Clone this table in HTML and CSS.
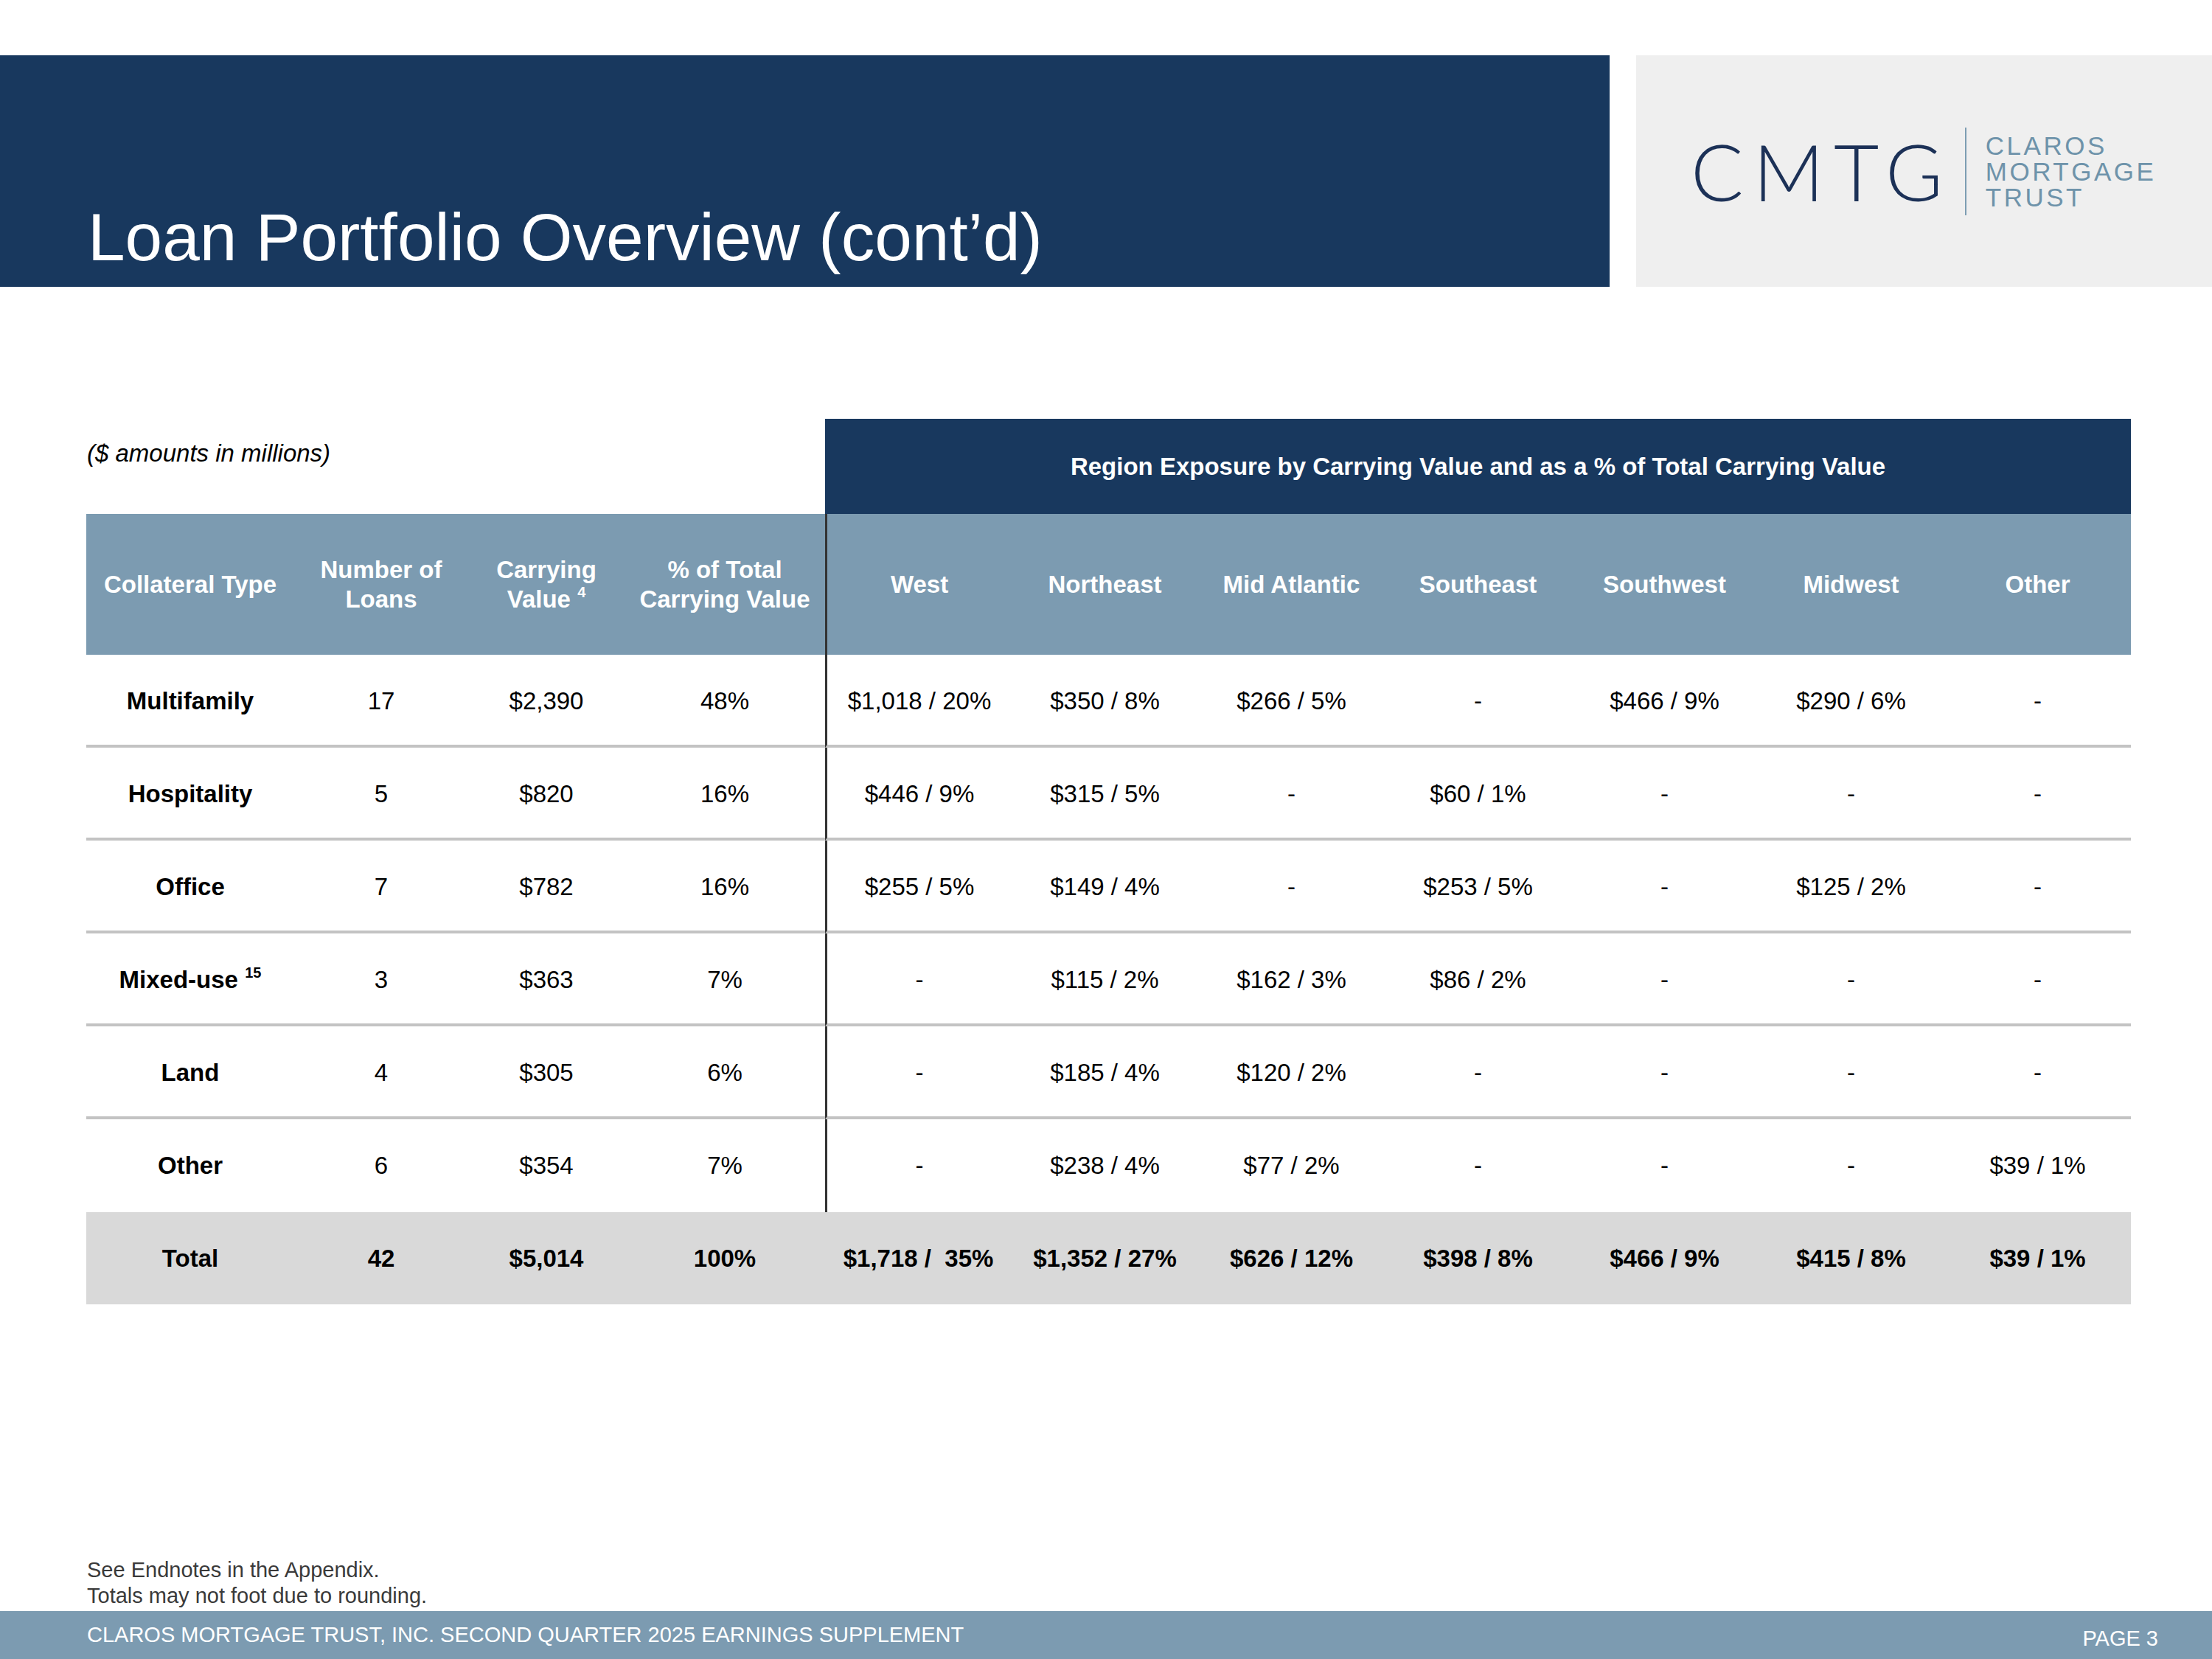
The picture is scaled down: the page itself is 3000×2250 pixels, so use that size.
FILE: index.html
```html
<!DOCTYPE html>
<html lang="en">
<head>
<meta charset="utf-8">
<title>Loan Portfolio Overview (cont’d)</title>
<link rel="stylesheet" href="styles.css">
</head>
<body>
<div class="page">
  <header class="top">
    <div class="title-bar">
      <h1 class="title">Loan Portfolio Overview (cont’d)</h1>
    </div>
    <div class="logo-box">
      <span class="logo-mark">CMTG</span>
      <span class="logo-rule"></span>
      <span class="logo-words">
        <span>CLAROS</span>
        <span>MORTGAGE</span>
        <span>TRUST</span>
      </span>
    </div>
  </header>

  <main class="content">
    <table class="grid">
      <colgroup>
        <col class="c-type"><col class="c-num"><col class="c-cv"><col class="c-pct">
        <col class="c-reg"><col class="c-reg"><col class="c-reg"><col class="c-reg"><col class="c-reg"><col class="c-reg"><col class="c-reg">
      </colgroup>
      <thead>
        <tr class="row-region">
          <td class="note" colspan="4">($ amounts in millions)</td>
          <th class="region-title" colspan="7">Region Exposure by Carrying Value and as a % of Total Carrying Value</th>
        </tr>
        <tr class="row-head">
          <th>Collateral Type</th>
          <th>Number of<br>Loans</th>
          <th>Carrying<br>Value <sup>4</sup></th>
          <th>% of Total<br>Carrying Value</th>
          <th class="split">West</th>
          <th>Northeast</th>
          <th>Mid Atlantic</th>
          <th>Southeast</th>
          <th>Southwest</th>
          <th>Midwest</th>
          <th>Other</th>
        </tr>
      </thead>
      <tbody>
        <tr class="row-data lined">
          <td class="type">Multifamily</td><td>17</td><td>$2,390</td><td>48%</td>
          <td class="split">$1,018 / 20%</td><td>$350 / 8%</td><td>$266 / 5%</td><td>-</td><td>$466 / 9%</td><td>$290 / 6%</td><td>-</td>
        </tr>
        <tr class="row-data lined">
          <td class="type">Hospitality</td><td>5</td><td>$820</td><td>16%</td>
          <td class="split">$446 / 9%</td><td>$315 / 5%</td><td>-</td><td>$60 / 1%</td><td>-</td><td>-</td><td>-</td>
        </tr>
        <tr class="row-data lined">
          <td class="type">Office</td><td>7</td><td>$782</td><td>16%</td>
          <td class="split">$255 / 5%</td><td>$149 / 4%</td><td>-</td><td>$253 / 5%</td><td>-</td><td>$125 / 2%</td><td>-</td>
        </tr>
        <tr class="row-data lined">
          <td class="type">Mixed-use <sup>15</sup></td><td>3</td><td>$363</td><td>7%</td>
          <td class="split">-</td><td>$115 / 2%</td><td>$162 / 3%</td><td>$86 / 2%</td><td>-</td><td>-</td><td>-</td>
        </tr>
        <tr class="row-data lined">
          <td class="type">Land</td><td>4</td><td>$305</td><td>6%</td>
          <td class="split">-</td><td>$185 / 4%</td><td>$120 / 2%</td><td>-</td><td>-</td><td>-</td><td>-</td>
        </tr>
        <tr class="row-data">
          <td class="type">Other</td><td>6</td><td>$354</td><td>7%</td>
          <td class="split">-</td><td>$238 / 4%</td><td>$77 / 2%</td><td>-</td><td>-</td><td>-</td><td>$39 / 1%</td>
        </tr>
        <tr class="row-total">
          <td>Total</td><td>42</td><td>$5,014</td><td>100%</td>
          <td>$1,718 /&nbsp; 35%</td><td>$1,352 / 27%</td><td>$626 / 12%</td><td>$398 / 8%</td><td>$466 / 9%</td><td>$415 / 8%</td><td>$39 / 1%</td>
        </tr>
      </tbody>
    </table>
  </main>

  <div class="notes">
    <p>See Endnotes in the Appendix.</p>
    <p>Totals may not foot due to rounding.</p>
  </div>

  <footer class="footer">
    <span class="footer-left">CLAROS MORTGAGE TRUST, INC. SECOND QUARTER 2025 EARNINGS SUPPLEMENT</span>
    <span class="footer-page">PAGE 3</span>
  </footer>
</div>
</body>
</html>
```

FILE: styles.css
```css
* { box-sizing: border-box; }

html, body {
  margin: 0;
  padding: 0;
  background: #ffffff;
}

body {
  font-family: "Liberation Sans", Arial, sans-serif;
  color: #000000;
}

.page {
  width: 3000px;
  height: 2250px;
  display: flex;
  flex-direction: column;
  overflow: hidden;
}

/* ---------- header ---------- */
.top {
  display: flex;
  margin-top: 75px;
  height: 314px;
}

.title-bar {
  width: 2183px;
  flex: none;
  background: #18385e;
  display: flex;
  align-items: flex-end;
  padding: 0 0 22px 119px;
}

.title {
  margin: 0;
  font-size: 91px;
  line-height: 91px;
  font-weight: normal;
  color: #ffffff;
  white-space: nowrap;
}

.logo-box {
  width: 781px;
  flex: none;
  margin-left: 36px;
  background: #efefef;
  display: flex;
  align-items: center;
  padding-left: 74px;
}

.logo-mark {
  font-family: "Lato", "Liberation Sans", sans-serif;
  font-weight: 300;
  font-size: 106px;
  line-height: 1;
  letter-spacing: 13px;
  color: #1c3157;
}

.logo-rule {
  width: 2px;
  height: 119px;
  background: #7d9db3;
  margin-left: 17px;
  margin-right: 26px;
}

.logo-words {
  display: flex;
  flex-direction: column;
  font-size: 35px;
  line-height: 35px;
  letter-spacing: 3.5px;
  color: #6e93aa;
}

/* ---------- table ---------- */
.content {
  padding: 179px 0 0 117px;
}

.grid {
  border-collapse: separate;
  border-spacing: 0;
  table-layout: fixed;
  width: 2773px;
  font-size: 33px;
}

.c-type { width: 282px; }
.c-num { width: 236px; }
.c-cv { width: 212px; }
.c-pct { width: 272px; }
.c-reg { width: 253px; }

.grid th,
.grid td {
  padding: 0;
  text-align: center;
  vertical-align: middle;
}

.row-region { height: 129px; }

.note {
  text-align: left !important;
  vertical-align: top !important;
  padding-top: 27px !important;
  font-style: italic;
  line-height: 1.2;
  padding-left: 1px !important;
}

.region-title {
  background: #18385e;
  color: #ffffff;
  font-weight: bold;
  line-height: 1.2;
}

.row-head { height: 191px; }

.row-head th {
  background: #7c9bb1;
  color: #ffffff;
  font-weight: bold;
  line-height: 1.2;
}

sup {
  font-size: 20px;
  line-height: 0;
  vertical-align: 0;
  position: relative;
  top: -14px;
}

.row-data { height: 126px; }

.row-data td {
  line-height: 1.2;
}

.row-data.lined td {
  border-bottom: 4px solid #c3c3c3;
  padding-top: 4px;
}

.grid .split {
  border-left: 3px solid #333333;
}

.type { font-weight: bold; }

.row-total { height: 125px; }

.row-total td {
  background: #d9d9d9;
  font-weight: bold;
  line-height: 1.2;
}

/* ---------- notes & footer ---------- */
.notes {
  margin-top: auto;
  padding-left: 118px;
  margin-bottom: 3px;
  font-size: 29px;
  line-height: 35px;
  color: #3a3a3a;
}

.notes p { margin: 0; }

.footer {
  height: 65px;
  flex: none;
  background: #7c9bb1;
  color: #ffffff;
  display: flex;
  align-items: center;
  justify-content: space-between;
  padding: 0 73px 0 118px;
  font-size: 29px;
  line-height: 29px;
}

.footer-page {
  margin-top: 10px;
}
```
